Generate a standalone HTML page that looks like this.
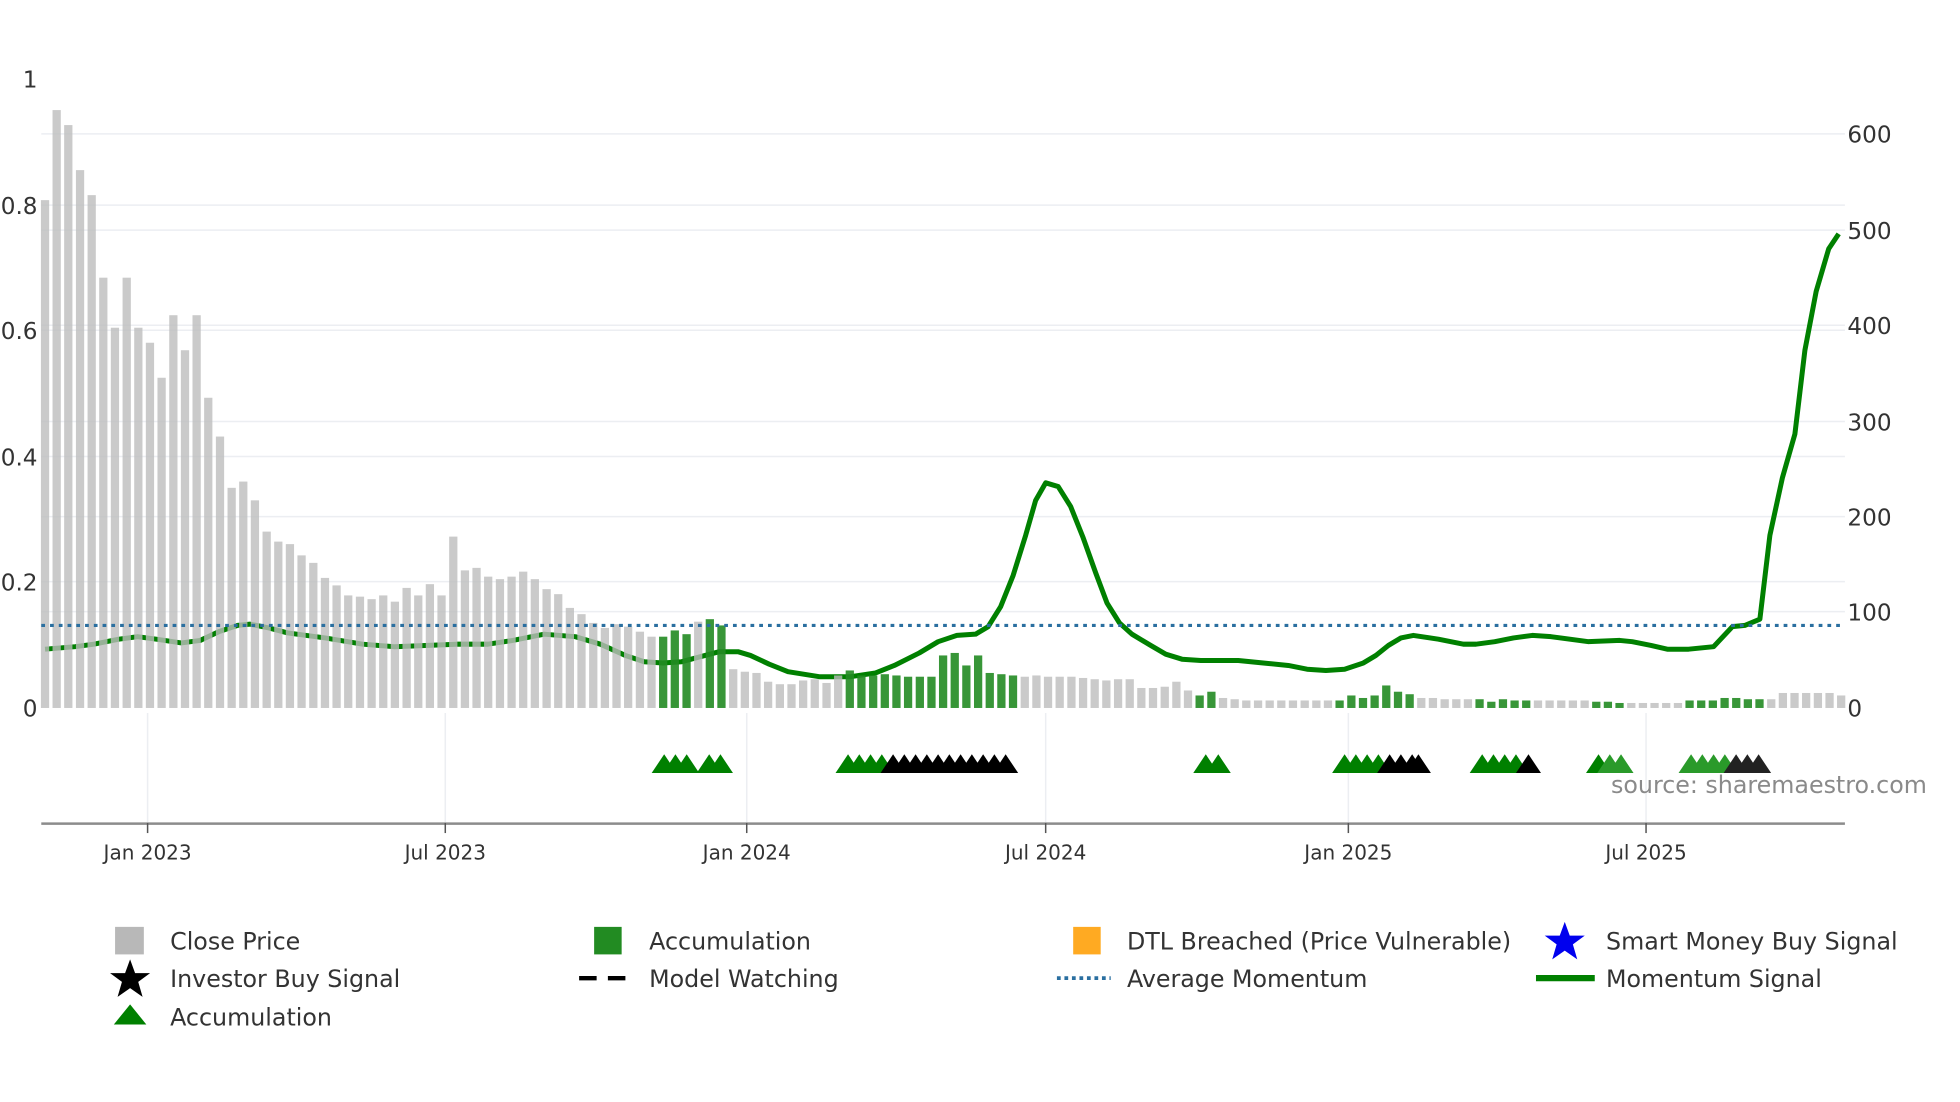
<!DOCTYPE html>
<html><head><meta charset="utf-8">
<style>
html,body{margin:0;padding:0;background:#fff;}
svg{display:block;font-family:"DejaVu Sans","Liberation Sans",sans-serif;}
</style></head>
<body>
<svg id="c" width="1960" height="1102" viewBox="0 0 1567 881" preserveAspectRatio="none" xmlns="http://www.w3.org/2000/svg">
<g stroke="#eceef2" stroke-width="1.2">
<line x1="33" x2="1475" y1="107" y2="107"/><line x1="33" x2="1475" y1="164" y2="164"/>
<line x1="33" x2="1475" y1="184" y2="184"/><line x1="33" x2="1475" y1="260" y2="260"/>
<line x1="33" x2="1475" y1="264" y2="264"/><line x1="33" x2="1475" y1="337" y2="337"/>
<line x1="33" x2="1475" y1="365" y2="365"/><line x1="33" x2="1475" y1="413" y2="413"/>
<line x1="33" x2="1475" y1="465" y2="465"/><line x1="33" x2="1475" y1="489" y2="489"/>
<line x1="118" x2="118" y1="570" y2="658"/><line x1="356" x2="356" y1="570" y2="658"/>
<line x1="597" x2="597" y1="570" y2="658"/><line x1="836" x2="836" y1="570" y2="658"/>
<line x1="1078" x2="1078" y1="570" y2="658"/><line x1="1316" x2="1316" y1="570" y2="658"/>
</g>
<g font-size="18.5" fill="#333">
<text x="30" y="70" text-anchor="end">1</text>
<text x="30" y="171" text-anchor="end">0.8</text>
<text x="30" y="271" text-anchor="end">0.6</text>
<text x="30" y="372" text-anchor="end">0.4</text>
<text x="30" y="472" text-anchor="end">0.2</text>
<text x="30" y="573" text-anchor="end">0</text>
<text x="1477" y="114">600</text><text x="1477" y="191">500</text>
<text x="1477" y="267">400</text><text x="1477" y="344">300</text>
<text x="1477" y="420">200</text><text x="1477" y="496">100</text>
<text x="1477" y="573">0</text>
</g>
<polyline id="mom" fill="none" stroke="#008000" stroke-width="4" stroke-linejoin="round"/>
<g id="bars"></g>
<line x1="33" x2="1472" y1="500" y2="500" stroke="#2a6fa0" stroke-width="2.5" stroke-dasharray="3,4"/>
<g id="tri"></g>
<text x="1288" y="634" font-size="19" fill="#8a8a8a">source: sharemaestro.com</text>
<line x1="33" x2="1475" y1="658.5" y2="658.5" stroke="#8c8c8c" stroke-width="2"/>
<g stroke="#555" stroke-width="1.2">
<line x1="118" x2="118" y1="658" y2="666"/><line x1="356" x2="356" y1="658" y2="666"/>
<line x1="597" x2="597" y1="658" y2="666"/><line x1="836" x2="836" y1="658" y2="666"/>
<line x1="1078" x2="1078" y1="658" y2="666"/><line x1="1316" x2="1316" y1="658" y2="666"/>
</g>
<g font-size="16" fill="#333" text-anchor="middle">
<text x="118" y="687">Jan 2023</text><text x="356" y="687">Jul 2023</text>
<text x="597" y="687">Jan 2024</text><text x="836" y="687">Jul 2024</text>
<text x="1078" y="687">Jan 2025</text><text x="1316" y="687">Jul 2025</text>
</g>
<g font-size="19" fill="#333">
<rect x="92" y="741" width="23" height="22" fill="#b8b8b8"/><text x="136" y="759">Close Price</text>
<rect x="475" y="741" width="22" height="22" fill="#228b22"/><text x="519" y="759">Accumulation</text>
<rect x="858" y="741" width="22" height="22" fill="#ffaa22"/><text x="901" y="759">DTL Breached (Price Vulnerable)</text>
<polygon points="1251,737 1255,748 1267,748 1257.5,755 1261,767 1251,760 1241,767 1244.5,755 1235,748 1247,748" fill="#0000ee"/>
<text x="1284" y="759">Smart Money Buy Signal</text>
<polygon points="104,767 108,778 120,778 110.5,785 114,797 104,790 94,797 97.5,785 88,778 100,778" fill="#000"/>
<text x="136" y="789">Investor Buy Signal</text>
<line x1="463" x2="506" y1="782" y2="782" stroke="#000" stroke-width="3.5" stroke-dasharray="14,9"/>
<text x="519" y="789">Model Watching</text>
<line x1="845" x2="888" y1="782" y2="782" stroke="#2a6fa0" stroke-width="3" stroke-dasharray="3,3"/>
<text x="901" y="789">Average Momentum</text>
<line x1="1228" x2="1275" y1="782" y2="782" stroke="#008000" stroke-width="5"/>
<text x="1284" y="789">Momentum Signal</text>
<polygon points="91,819 104,803 117,819" fill="#008000"/>
<text x="136" y="820">Accumulation</text>
</g>
</svg>
<script>
(function(){
var tops=[160,88,100,136,156,222,262,222,262,274,302,252,280,252,318,349,390,385,400,425,433,435,444,450,462,468,476,477,479,476,481,470,476,467,476,429,456,454,461,463,461,457,463,471,475,486,491,498,502,499,501,505,509,509,
504,507,497,495,500,535,537,538,545,547,547,544,543,546,540,536,540,540,539,540,541,541,541,524,522,532,524,538,539,540,
541,540,541,541,541,542,543,544,543,543,550,550,549,545,
552,556,553,558,559,560,560,560,560,560,560,560,560,
560,556,558,556,548,553,555,558,558,559,559,559,559,561,559,560,560,560,560,560,560,560,561,561,562,562,562,562,562,562,
560,560,560,558,558,559,559,559,554,554,554,554,554,556];
var gr=[[527,553],[565,580],[675,812],[958,975],[1070,1135],[1180,1225],[1272,1300],[1345,1412]];
var n=tops.length,step=(1472-36)/(n-1),s='',i;
for(i=0;i<n;i++){
 var cx=36+i*step,t=tops[i],isg=false;
 gr.forEach(function(r){if(cx>=r[0]&&cx<=r[1])isg=true;});
 s+='<rect x="'+(cx-3.3).toFixed(1)+'" y="'+t+'" width="6.6" height="'+(566-t)+'" fill="'+(isg?'#228b22':'#bdbdbd')+'" opacity="'+(isg?0.9:0.8)+'"/>';
}
document.getElementById('bars').innerHTML=s;
var pts=[[36,519],[60,517],[75,515],[95,511],[110,509],[125,511],[145,514],[160,512],[175,505],[190,500],[200,499],[215,502],[230,506],[260,510],[290,515],[315,517],[340,516],[365,515],[390,515],[410,512],[435,507],[460,509],[480,515],[500,524],[515,529],[530,530],[545,529],[560,525],[575,521],[590,521],[600,524],[615,531],[630,537],[655,541],[680,541],[700,538],[715,532],[735,522],[750,513],[765,508],[780,507],[790,501],[800,485],[810,460],[820,428],[828,400],[836,386],[846,389],[856,405],[866,430],[876,458],[885,482],[895,498],[905,507],[920,516],[932,523],[945,527],[960,528],[990,528],[1010,530],[1030,532],[1045,535],[1060,536],[1075,535],[1090,530],[1100,524],[1110,516],[1120,510],[1130,508],[1150,511],[1170,515],[1180,515],[1195,513],[1210,510],[1225,508],[1240,509],[1270,513],[1295,512],[1305,513],[1320,516],[1333,519],[1350,519],[1370,517],[1385,501],[1395,500],[1407,495],[1415,428],[1425,382],[1435,347],[1443,280],[1452,233],[1462,199],[1470,187]];
document.getElementById('mom').setAttribute('points',pts.map(function(p){return p.join(',')}).join(' '));
var tri=[[531,'#008000'],[540,'#008000'],[549,'#008000'],[567,'#008000'],[576,'#008000'],
[678,'#008000'],[687,'#008000'],[696,'#008000'],[705,'#008000']];
for(var x2=714;x2<=812;x2+=9)tri.push([x2,'#000']);
tri.push([964,'#008000'],[974,'#008000']);
[1075,1084,1093,1102].forEach(function(v){tri.push([v,'#008000'])});
[1111,1120,1129,1134].forEach(function(v){tri.push([v,'#000'])});
[1185,1194,1203,1212].forEach(function(v){tri.push([v,'#008000'])});
tri.push([1222,'#000']);
tri.push([1278,'#008000'],[1287,'#2a9a2a'],[1296,'#2a9a2a']);
[1352,1361,1370,1379].forEach(function(v){tri.push([v,'#2a9a2a'])});
[1388,1397,1406].forEach(function(v){tri.push([v,'#222'])});
var ts='';
tri.forEach(function(t){var c=t[0];ts+='<polygon points="'+(c-10)+',618 '+c+',603 '+(c+10)+',618" fill="'+t[1]+'"/>';});
document.getElementById('tri').innerHTML=ts;
})();
</script>
</body></html>
